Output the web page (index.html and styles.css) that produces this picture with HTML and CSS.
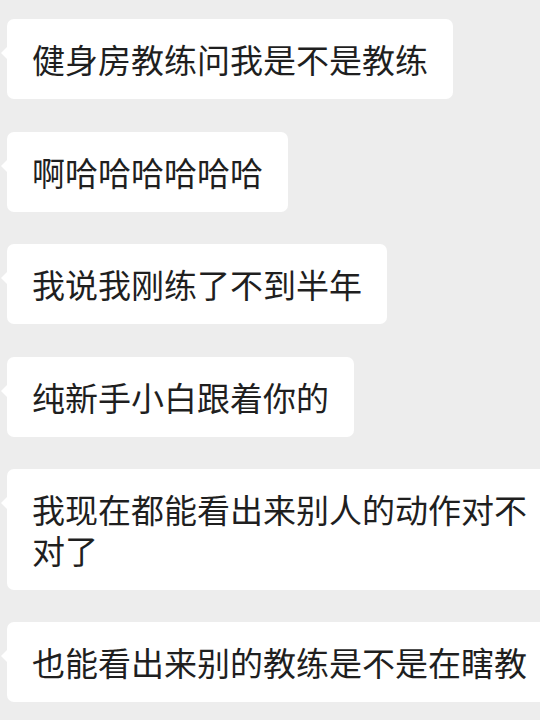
FILE: index.html
```html
<!DOCTYPE html>
<html lang="zh-CN">
<head>
<meta charset="utf-8">
<link rel="stylesheet" href="styles.css">
</head>
<body>
<div class="chat">
  <div class="bubble">健身房教练问我是不是教练</div>
  <div class="bubble">啊哈哈哈哈哈哈</div>
  <div class="bubble">我说我刚练了不到半年</div>
  <div class="bubble">纯新手小白跟着你的</div>
  <div class="bubble">我现在都能看出来别人的动作对不对了</div>
  <div class="bubble">也能看出来别的教练是不是在瞎教</div>
</div>
</body>
</html>
```
FILE: styles.css
```css
html, body {
  margin: 0;
  padding: 0;
  background: #ededed;
  overflow: hidden;
  width: 540px;
  height: 720px;
}
.chat {
  display: flex;
  flex-direction: column;
  align-items: flex-start;
  gap: 32.5px;
  padding-top: 19px;
  padding-left: 7px;
}
.bubble {
  position: relative;
  box-sizing: content-box;
  width: max-content;
  max-width: 500px;
  background: #ffffff;
  border-radius: 7px;
  padding: 20px 25px 19.5px 25px;
  font-family: "Noto Sans CJK SC", "Noto Sans", sans-serif;
  font-size: 33px;
  line-height: 40.5px;
  color: #1f1f1f;
  flex-shrink: 0;
}
.bubble::before {
  content: "";
  position: absolute;
  left: -6px;
  top: 28px;
  border-top: 6px solid transparent;
  border-bottom: 6px solid transparent;
  border-right: 6px solid #ffffff;
}
```
